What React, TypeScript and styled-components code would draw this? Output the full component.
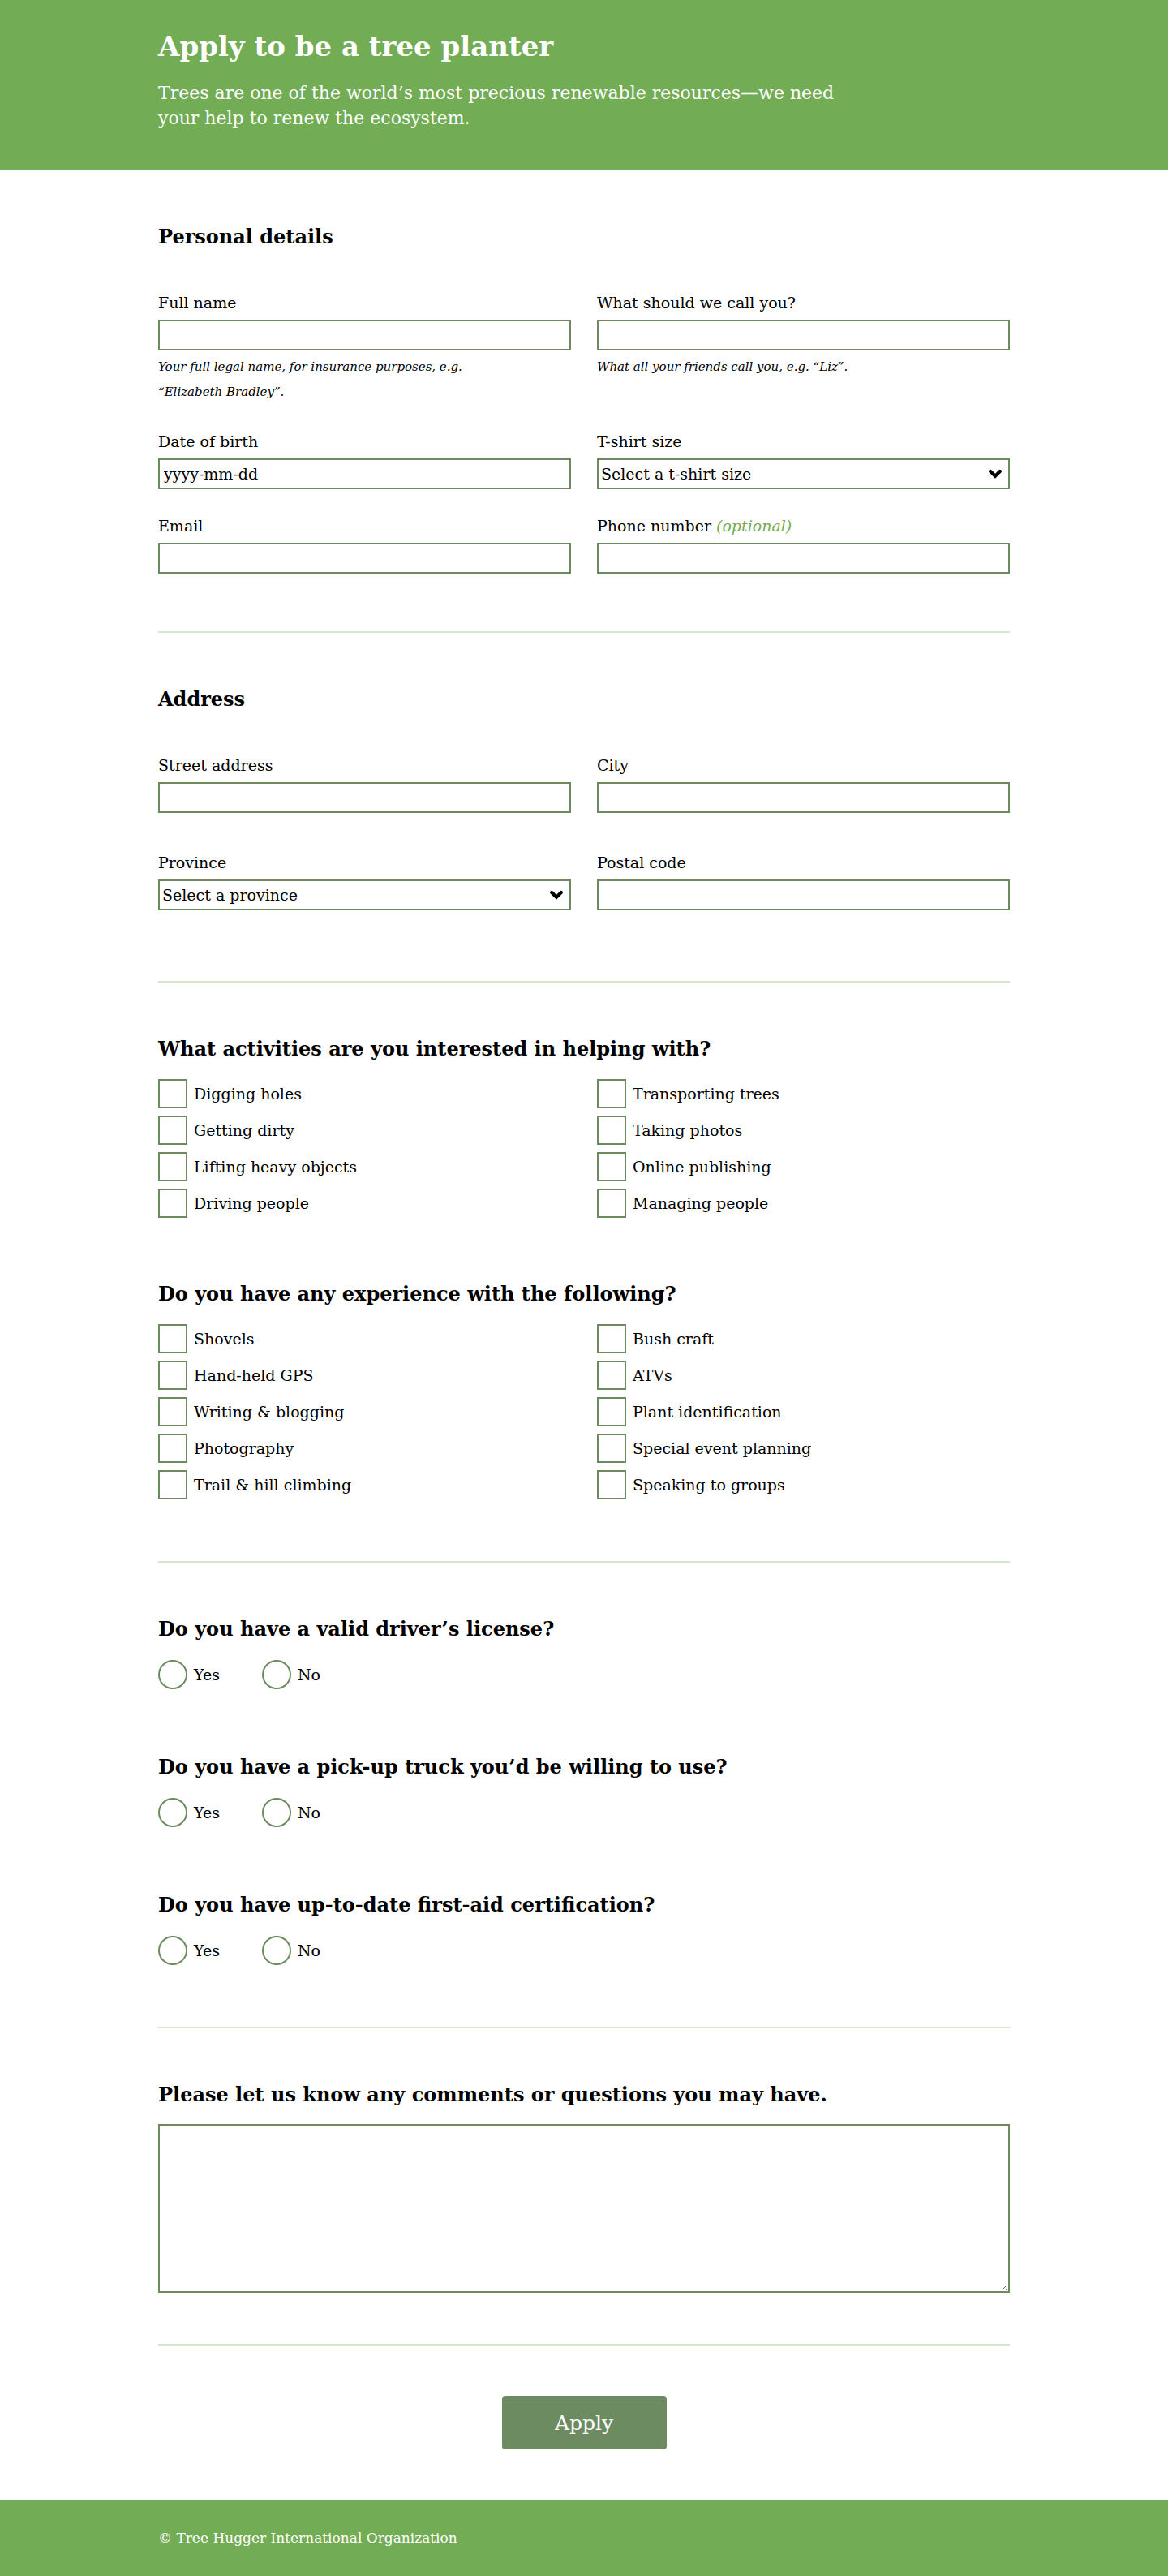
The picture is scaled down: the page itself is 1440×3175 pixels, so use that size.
import React from "react";
import styled, { createGlobalStyle } from "styled-components";

const GREEN = "#72ac55";
const DARK_GREEN = "#6c8b60";
const RULE = "#d5e7ca";
const SERIF = `"DejaVu Serif", "Liberation Serif", serif`;

const GlobalStyle = createGlobalStyle`
  html, body {
    margin: 0;
    padding: 0;
    background: #fff;
    color: #000;
    font-family: ${SERIF};
  }
  * { box-sizing: border-box; }
`;

const Container = styled.div`
  width: 1050px;
  margin: 0 auto;
`;

const Masthead = styled.header`
  background: ${GREEN};
  color: #fff;
  padding: 35px 0 49px;
`;

const Title = styled.h1`
  margin: 0;
  font-size: 34px;
  line-height: 44px;
  font-weight: bold;
`;

const Lede = styled.p`
  margin: 20px 0 0;
  font-size: 22px;
  line-height: 31px;
  max-width: 850px;
`;

const Section = styled.section<{ $padBottom?: number; $gap?: number }>`
  display: flex;
  flex-direction: column;
  gap: ${(p) => p.$gap ?? 0}px;
  padding: 65px 0 ${(p) => p.$padBottom ?? 71}px;
`;

const Divider = styled.hr`
  margin: 0;
  border: 0;
  height: 2px;
  background: ${RULE};
`;

const SectionTitle = styled.h2`
  margin: 0;
  font-size: 24px;
  line-height: 34px;
  font-weight: bold;
`;

const FieldGrid = styled.div<{ $rowGap: number; $after?: number }>`
  display: grid;
  grid-template-columns: 1fr 1fr;
  column-gap: 32px;
  row-gap: ${(p) => p.$rowGap}px;
  align-items: start;
  margin-top: 49px;
  margin-bottom: ${(p) => p.$after ?? 0}px;
`;

const Field = styled.div`
  display: flex;
  flex-direction: column;
`;

const Label = styled.label`
  font-size: 19px;
  line-height: 30px;
  margin-bottom: 6px;
`;

const Optional = styled.em`
  color: ${GREEN};
`;

const TextInput = styled.input`
  width: 100%;
  height: 38px;
  margin: 0;
  padding: 0 5px;
  border: 2px solid ${DARK_GREEN};
  border-radius: 0;
  background: #fff;
  font-family: ${SERIF};
  font-size: 19px;
  color: #000;
  outline: none;
  &::placeholder {
    color: #000;
    opacity: 1;
  }
`;

const SelectWrap = styled.div`
  position: relative;
`;

const Select = styled.select`
  width: 100%;
  height: 38px;
  margin: 0;
  padding: 0 32px 0 3px;
  border: 2px solid ${DARK_GREEN};
  border-radius: 0;
  background: #fff;
  font-family: ${SERIF};
  font-size: 19px;
  color: #000;
  appearance: none;
  -webkit-appearance: none;
  outline: none;
`;

const Chevron = styled.svg`
  position: absolute;
  right: 10px;
  top: 50%;
  transform: translateY(-50%);
  pointer-events: none;
`;

const Help = styled.p`
  margin: 5px 0 0;
  max-width: 400px;
  font-size: 15px;
  line-height: 31px;
  font-style: italic;
`;

const Question = styled.div`
  display: flex;
  flex-direction: column;
`;

const CheckGrid = styled.div<{ $rows: number }>`
  display: grid;
  grid-template-columns: 1fr 1fr;
  grid-template-rows: repeat(${(p) => p.$rows}, 36px);
  grid-auto-flow: column;
  column-gap: 32px;
  row-gap: 9px;
  margin: 20px 0 5px;
`;

const Choice = styled.label`
  display: flex;
  align-items: center;
  gap: 8px;
  height: 36px;
  font-size: 19px;
`;

const Box = styled.input`
  appearance: none;
  -webkit-appearance: none;
  flex: none;
  width: 36px;
  height: 36px;
  margin: 0;
  border: 2px solid ${DARK_GREEN};
  border-radius: ${(p) => (p.type === "radio" ? "50%" : "0")};
  background: #fff;
`;

const RadioRow = styled.div`
  display: flex;
  gap: 52px;
  margin: 21px 0 5px;
`;

const TextArea = styled.textarea`
  display: block;
  width: 100%;
  height: 208px;
  margin: 19px 0 0;
  border: 2px solid ${DARK_GREEN};
  border-radius: 0;
  font-family: ${SERIF};
  font-size: 19px;
  outline: none;
`;

const ButtonBar = styled.div`
  display: flex;
  justify-content: center;
  padding: 62px 0;
`;

const ApplyButton = styled.button`
  width: 203px;
  height: 66px;
  border: 0;
  border-radius: 4px;
  background: #6d8b61;
  color: #fff;
  font-family: ${SERIF};
  font-size: 25px;
  cursor: pointer;
`;

const SiteFooter = styled.footer`
  background: ${GREEN};
  color: #fff;
  height: 94px;
  display: flex;
  align-items: center;
  font-size: 17px;
`;

const ChevronIcon = () => (
  <Chevron width="16" height="12" viewBox="0 0 16 12" aria-hidden="true">
    <path d="M2.2 3 L8 8.8 L13.8 3" fill="none" stroke="#000" strokeWidth="4.2" strokeLinecap="round" strokeLinejoin="miter" />
  </Chevron>
);

const TextField = ({ label, help, placeholder, optional }: { label: string; help?: string; placeholder?: string; optional?: boolean }) => (
  <Field>
    <Label>
      {label}
      {optional && (
        <>
          {" "}
          <Optional>(optional)</Optional>
        </>
      )}
    </Label>
    <TextInput type="text" placeholder={placeholder} />
    {help && <Help>{help}</Help>}
  </Field>
);

const SelectField = ({ label, prompt }: { label: string; prompt: string }) => (
  <Field>
    <Label>{label}</Label>
    <SelectWrap>
      <Select defaultValue="">
        <option value="">{prompt}</option>
      </Select>
      <ChevronIcon />
    </SelectWrap>
  </Field>
);

const CheckQuestion = ({ title, items }: { title: string; items: string[] }) => {
  const rows = Math.ceil(items.length / 2);
  return (
    <Question>
      <SectionTitle>{title}</SectionTitle>
      <CheckGrid $rows={rows}>
        {items.map((item) => (
          <Choice key={item}>
            <Box type="checkbox" />
            {item}
          </Choice>
        ))}
      </CheckGrid>
    </Question>
  );
};

const RadioQuestion = ({ title, name }: { title: string; name: string }) => (
  <Question>
    <SectionTitle>{title}</SectionTitle>
    <RadioRow>
      <Choice>
        <Box type="radio" name={name} />
        Yes
      </Choice>
      <Choice>
        <Box type="radio" name={name} />
        No
      </Choice>
    </RadioRow>
  </Question>
);

export default function App() {
  return (
    <>
      <GlobalStyle />
      <Masthead>
        <Container>
          <Title>Apply to be a tree planter</Title>
          <Lede>Trees are one of the world’s most precious renewable resources—we need your help to renew the ecosystem.</Lede>
        </Container>
      </Masthead>
      <main>
        <Container>
          <Section>
            <SectionTitle>Personal details</SectionTitle>
            <FieldGrid $rowGap={30}>
              <TextField label="Full name" help="Your full legal name, for insurance purposes, e.g. “Elizabeth Bradley”." />
              <TextField label="What should we call you?" help="What all your friends call you, e.g. “Liz”." />
              <TextField label="Date of birth" placeholder="yyyy-mm-dd" />
              <SelectField label="T-shirt size" prompt="Select a t-shirt size" />
              <TextField label="Email" />
              <TextField label="Phone number" optional />
            </FieldGrid>
          </Section>
          <Divider />
          <Section>
            <SectionTitle>Address</SectionTitle>
            <FieldGrid $rowGap={46} $after={16}>
              <TextField label="Street address" />
              <TextField label="City" />
              <SelectField label="Province" prompt="Select a province" />
              <TextField label="Postal code" />
            </FieldGrid>
          </Section>
          <Divider />
          <Section $gap={72}>
            <CheckQuestion
              title="What activities are you interested in helping with?"
              items={["Digging holes", "Getting dirty", "Lifting heavy objects", "Driving people", "Transporting trees", "Taking photos", "Online publishing", "Managing people"]}
            />
            <CheckQuestion
              title="Do you have any experience with the following?"
              items={["Shovels", "Hand-held GPS", "Writing & blogging", "Photography", "Trail & hill climbing", "Bush craft", "ATVs", "Plant identification", "Special event planning", "Speaking to groups"]}
            />
          </Section>
          <Divider />
          <Section $gap={74}>
            <RadioQuestion title="Do you have a valid driver’s license?" name="license" />
            <RadioQuestion title="Do you have a pick-up truck you’d be willing to use?" name="truck" />
            <RadioQuestion title="Do you have up-to-date first-aid certification?" name="firstaid" />
          </Section>
          <Divider />
          <Section $padBottom={63}>
            <SectionTitle>Please let us know any comments or questions you may have.</SectionTitle>
            <TextArea />
          </Section>
          <Divider />
          <ButtonBar>
            <ApplyButton type="submit">Apply</ApplyButton>
          </ButtonBar>
        </Container>
      </main>
      <SiteFooter>
        <Container>© Tree Hugger International Organization</Container>
      </SiteFooter>
    </>
  );
}
